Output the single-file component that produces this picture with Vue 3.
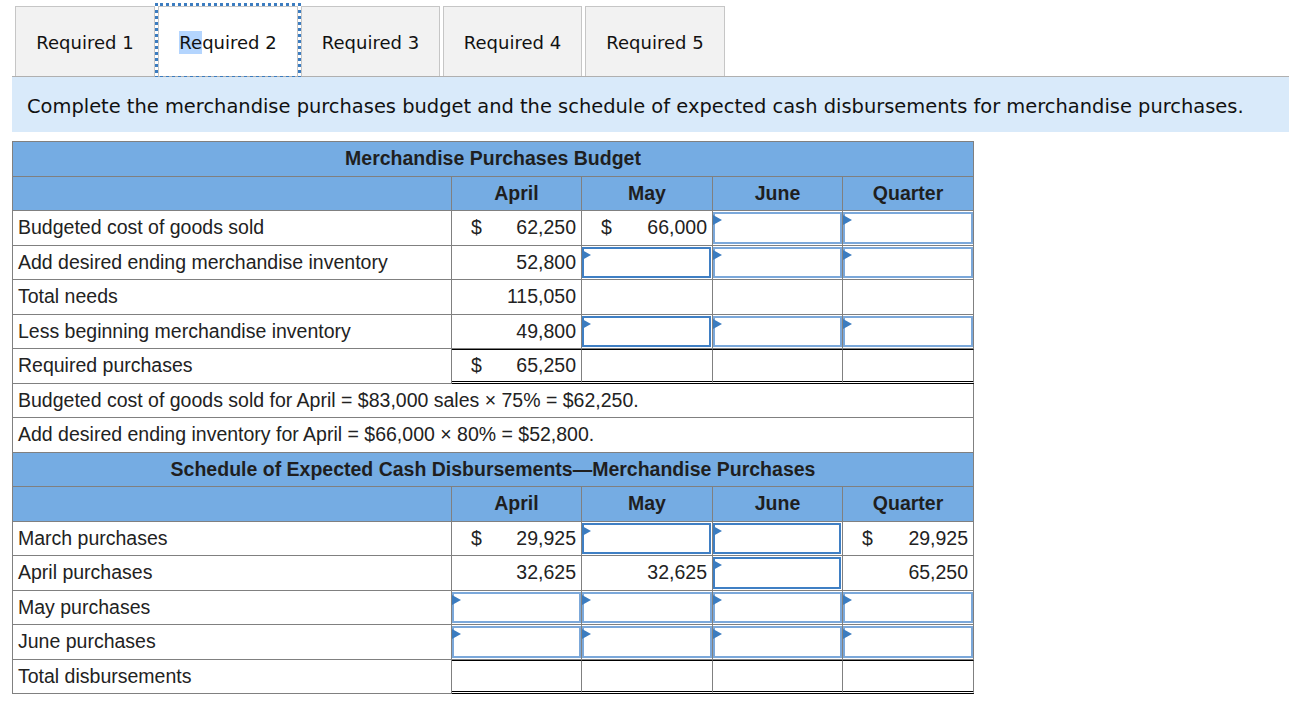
<script setup>
const tabs = ['Required 1', 'Required 2', 'Required 3', 'Required 4', 'Required 5']
const months = ['April', 'May', 'June', 'Quarter']
const S = { f: 'strong' }
const L = { f: 'light' }
const v = (t, d = false) => ({ t, d })
const E = {}
const rows = [
  { type: 'title', label: 'Merchandise Purchases Budget' },
  { type: 'head' },
  { label: 'Budgeted cost of goods sold', cells: [v('62,250', true), v('66,000', true), L, L] },
  { label: 'Add desired ending merchandise inventory', cells: [v('52,800'), S, L, L] },
  { label: 'Total needs', cells: [v('115,050'), E, E, E] },
  { label: 'Less beginning merchandise inventory', cells: [v('49,800'), S, L, L] },
  { label: 'Required purchases', total: true, cells: [v('65,250', true), E, E, E] },
  { type: 'note', label: 'Budgeted cost of goods sold for April = $83,000 sales × 75% = $62,250.' },
  { type: 'note', label: 'Add desired ending inventory for April = $66,000 × 80% = $52,800.' },
  { type: 'title', label: 'Schedule of Expected Cash Disbursements—Merchandise Purchases' },
  { type: 'head' },
  { label: 'March purchases', cells: [v('29,925', true), S, S, v('29,925', true)] },
  { label: 'April purchases', cells: [v('32,625'), v('32,625'), S, v('65,250')] },
  { label: 'May purchases', cells: [L, L, L, L] },
  { label: 'June purchases', cells: [L, L, L, L] },
  { label: 'Total disbursements', total: true, cells: [E, E, E, E] },
]
</script>

<template>
  <div class="page">
    <div class="tabs">
      <div v-for="(t, i) in tabs" :key="t" class="tab" :class="{ active: i === 1 }">
        <template v-if="i === 1"><span class="sel">Re</span>quired 2</template>
        <template v-else>{{ t }}</template>
      </div>
    </div>
    <div class="banner">Complete the merchandise purchases budget and the schedule of expected cash disbursements for merchandise purchases.</div>
    <table class="sheet">
      <colgroup>
        <col class="c0" /><col class="c1" /><col class="c2" /><col class="c3" /><col class="c4" />
      </colgroup>
      <tbody>
        <tr v-for="(r, i) in rows" :key="i" :class="{ total: r.total }">
          <td v-if="r.type === 'title'" colspan="5" class="title">{{ r.label }}</td>
          <template v-else-if="r.type === 'head'">
            <td class="hd"></td>
            <td v-for="m in months" :key="m" class="hd mid">{{ m }}</td>
          </template>
          <td v-else-if="r.type === 'note'" colspan="5" class="label">{{ r.label }}</td>
          <template v-else>
            <td class="label">{{ r.label }}</td>
            <td v-for="(c, j) in r.cells" :key="j" class="val" :class="{ inp: c.f }">
              <div v-if="c.f" class="field" :class="c.f"></div>
              <div v-else-if="c.t" class="num"><span>{{ c.d ? '$' : '' }}</span><span>{{ c.t }}</span></div>
            </td>
          </template>
        </tr>
      </tbody>
    </table>
  </div>
</template>

<style>
html, body { margin: 0; background: #fff; }
</style>

<style scoped>
.page { padding: 6px 0 0 12px; width: 1277px; }
.tabs { display: flex; gap: 3px; padding-left: 3px; height: 70px; border-bottom: 1px solid #b0b0b0; }
.tab {
  box-sizing: border-box; width: 140px; height: 70px;
  background: #f2f2f2; border: 1px solid #c6c6c6; border-bottom: 0;
  display: flex; align-items: center; justify-content: center;
  padding-top: 2px;
  font: 18px "DejaVu Sans", sans-serif; color: #111;
}
.tab:nth-child(3), .tab:nth-child(4) { width: 139px; }
.tab.active { background: #fff; outline: 3px dotted #3b7cc0; outline-offset: 0; }
.sel { background: #b4d5fe; padding: 1px 0; }
.banner {
  position: relative;
  box-sizing: border-box; height: 55px; background: #d9eafa;
  padding: 4px 0 0 15px; display: flex; align-items: center;
  font: 19.45px "DejaVu Sans", sans-serif; color: #111; white-space: nowrap;
}
.sheet {
  margin: 9px 0 0 0; border-collapse: separate; border-spacing: 0; table-layout: fixed;
  width: 962px; border-left: 1px solid #808080; border-top: 1px solid #808080;
  font: 19.5px "Liberation Sans", sans-serif; color: #222;
}
.c0 { width: 439px; } .c1 { width: 130px; } .c2 { width: 131px; } .c3 { width: 130px; } .c4 { width: 131px; }
td { box-sizing: border-box; padding: 0; border-right: 1px solid #808080; border-bottom: 1px solid #808080; }
tr:nth-child(odd) td { height: 35px; padding-bottom: 2px; }
tr:nth-child(even) td { height: 34px; }
.title, .hd { background: #75ace3; font-weight: 700; color: #1f1f1f; text-align: center; }
.label { padding-left: 5px; white-space: nowrap; }
.num { display: flex; justify-content: space-between; padding: 0 5px 0 19px; }
tr td.inp, tr:nth-child(odd) td.inp { padding: 1px 0 1px 0; }
.field { box-sizing: border-box; height: 100%; position: relative; background: #fff; }
.field::before {
  content: ""; position: absolute; left: -2px; top: 1px;
  border-left: 9px solid #3b7cc0; border-top: 5px solid transparent; border-bottom: 5px solid transparent;
}
.strong { border: 2px solid #3f7fc4; margin-right: 1px; }
.light { border: 2px solid #7ba8da; }
.total .val { border-top: 1px solid #000; border-bottom: 3px double #000; }
tr.total:nth-child(odd) td.val { padding-bottom: 0; }
</style>
